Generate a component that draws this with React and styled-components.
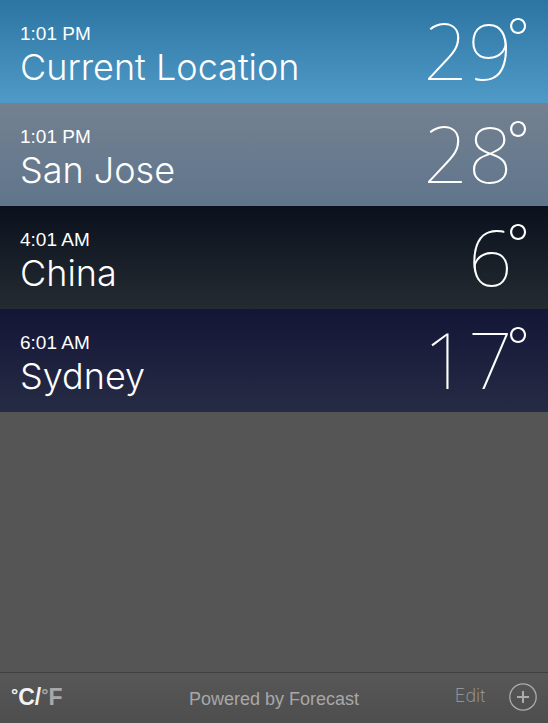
import React, { useState } from "react";
import styled, { createGlobalStyle } from "styled-components";

const GlobalStyle = createGlobalStyle`
  *, *::before, *::after { box-sizing: border-box; }
  body {
    margin: 0;
    background: #555;
    color: #fff;
    font-family: "Liberation Sans", Arial, sans-serif;
  }
`;

const Page = styled.div`
  display: flex;
  flex-direction: column;
  min-height: 100vh;
`;

const CityList = styled.ul`
  flex: 1;
  margin: 0;
  padding: 0;
  list-style: none;
`;

const CityRow = styled.li`
  display: flex;
  justify-content: space-between;
  align-items: flex-start;
  height: 103px;
  padding: 0 18px 0 20px;
  background: linear-gradient(${(p) => p.$from}, ${(p) => p.$to});
`;

const CityInfo = styled.div`
  padding-top: 23px;
`;

const Time = styled.div`
  font-size: 19px;
  line-height: 22px;
`;

const CityName = styled.div`
  font-family: Inter, "Liberation Sans", sans-serif;
  font-size: 36px;
  font-weight: 300;
  line-height: 44px;
`;

const Temperature = styled.div`
  display: flex;
  align-items: flex-start;
  font-family: "Noto Sans", "Liberation Sans", sans-serif;
  font-size: 78px;
  font-weight: 100;
  line-height: 100px;
`;

const Degree = styled.span`
  margin-left: -6px;
  font-family: Inter, "Liberation Sans", sans-serif;
  font-size: 52px;
  font-weight: 200;
  line-height: 76px;
`;

const Footer = styled.footer`
  display: grid;
  grid-template-columns: 1fr auto 1fr;
  align-items: center;
  height: 51px;
  padding: 0 11px;
  border-top: 1px solid #404040;
  background: linear-gradient(#575757, #4e4e4e);
`;

const FooterButton = styled.button`
  border: 0;
  padding: 0;
  background: none;
  color: #a0a0a0;
  font: inherit;
  cursor: pointer;
`;

const UnitButton = styled(FooterButton)`
  justify-self: start;
  padding-bottom: 3px;
  font-size: 23px;
  font-weight: 700;
  line-height: 24px;
`;

const Unit = styled.span`
  color: ${(p) => (p.$active ? "#f2f2f2" : "#a8a8a8")};
`;

const UnitDegree = styled.span`
  font-size: 18px;
  line-height: 1;
  vertical-align: 4px;
`;

const Credit = styled.a`
  padding-top: 1px;
  color: #a8a8a8;
  font-size: 18px;
  line-height: 22px;
  text-decoration: none;
`;

const Actions = styled.div`
  display: flex;
  justify-self: end;
  align-items: center;
  gap: 24px;
`;

const EditButton = styled(FooterButton)`
  padding-bottom: 4px;
  font-family: Inter, "Liberation Sans", sans-serif;
  font-size: 18px;
  font-weight: 200;
  line-height: 22px;
`;

const AddButton = styled(FooterButton)`
  display: flex;
  padding-bottom: 2px;
`;

const cities = [
  { time: "1:01 PM", name: "Current Location", temp: 29, from: "#2c75a3", to: "#509ac8" },
  { time: "1:01 PM", name: "San Jose", temp: 28, from: "#738190", to: "#60758c" },
  { time: "4:01 AM", name: "China", temp: 6, from: "#0a111d", to: "#242b31" },
  { time: "6:01 AM", name: "Sydney", temp: 17, from: "#131636", to: "#262b45" },
];

export default function App() {
  const [celsius, setCelsius] = useState(true);
  const shown = (t) => (celsius ? t : Math.round(t * 1.8 + 32));
  return (
    <Page>
      <GlobalStyle />
      <CityList>
        {cities.map((c) => (
          <CityRow key={c.name} $from={c.from} $to={c.to}>
            <CityInfo>
              <Time>{c.time}</Time>
              <CityName>{c.name}</CityName>
            </CityInfo>
            <Temperature>
              {shown(c.temp)}
              <Degree>°</Degree>
            </Temperature>
          </CityRow>
        ))}
      </CityList>
      <Footer>
        <UnitButton type="button" onClick={() => setCelsius(!celsius)}>
          <Unit $active={celsius}><UnitDegree>°</UnitDegree>C</Unit>
          <Unit $active>/</Unit>
          <Unit $active={!celsius}><UnitDegree>°</UnitDegree>F</Unit>
        </UnitButton>
        <Credit href="#forecast">Powered by Forecast</Credit>
        <Actions>
          <EditButton type="button">Edit</EditButton>
          <AddButton type="button" aria-label="Add location">
            <svg width="28" height="28" viewBox="0 0 28 28" fill="none" stroke="#acacac">
              <circle cx="14" cy="14" r="13.2" strokeWidth="1.3" />
              <path d="M14 8v12M8 14h12" strokeWidth="2" />
            </svg>
          </AddButton>
        </Actions>
      </Footer>
    </Page>
  );
}
